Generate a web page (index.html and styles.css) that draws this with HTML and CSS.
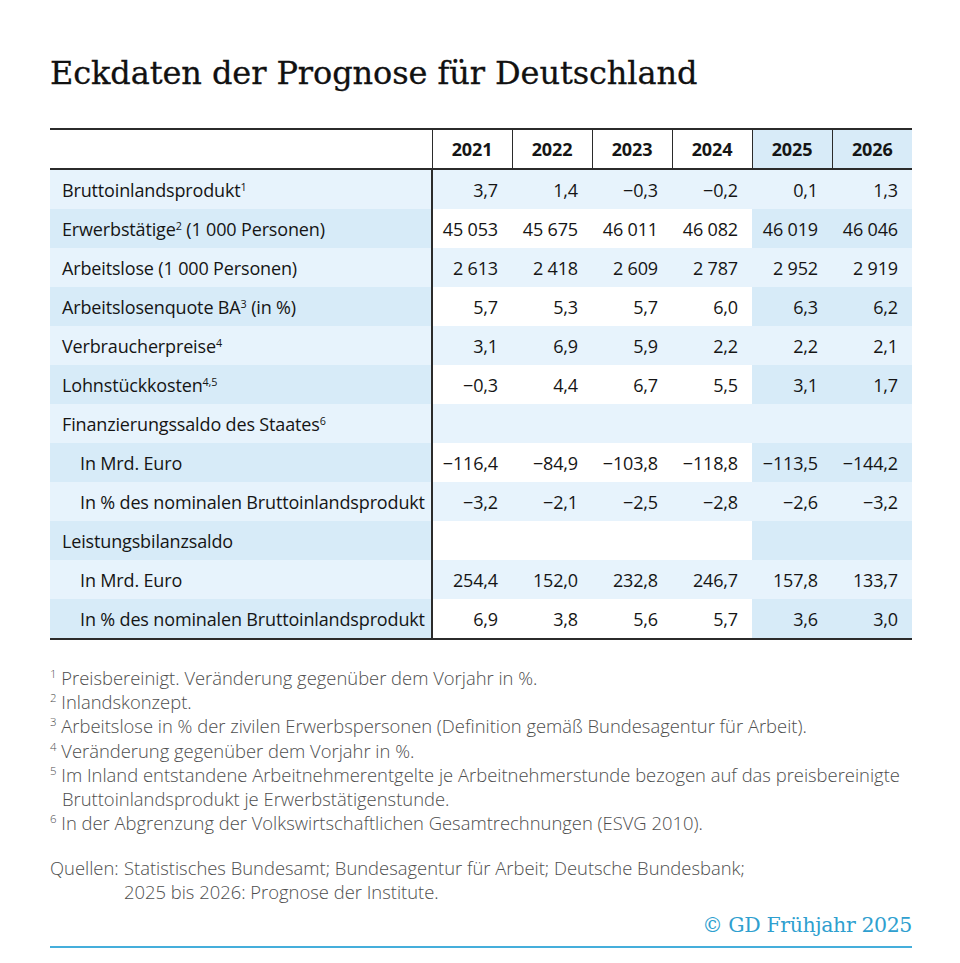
FILE: index.html
```html
<!DOCTYPE html>
<html lang="de">
<head>
<meta charset="utf-8">
<title>Eckdaten der Prognose für Deutschland</title>
<link rel="stylesheet" href="styles.css">
</head>
<body>
<main class="page">
  <h1 class="title">Eckdaten der Prognose für Deutschland</h1>
  <table class="data">
    <colgroup>
      <col class="c-label"><col class="c-year"><col class="c-year"><col class="c-year"><col class="c-year"><col class="c-year"><col class="c-year">
    </colgroup>
    <thead>
      <tr>
        <th class="h-label"></th>
        <th>2021</th><th>2022</th><th>2023</th><th>2024</th><th class="prog">2025</th><th class="prog last">2026</th>
      </tr>
    </thead>
    <tbody>
      <tr class="odd"><td class="label">Bruttoinlandsprodukt<sup>1</sup></td><td>3,7</td><td>1,4</td><td>−0,3</td><td>−0,2</td><td class="prog">0,1</td><td class="prog">1,3</td></tr>
      <tr class="even"><td class="label">Erwerbstätige<sup>2</sup> (1 000 Personen)</td><td>45 053</td><td>45 675</td><td>46 011</td><td>46 082</td><td class="prog">46 019</td><td class="prog">46 046</td></tr>
      <tr class="odd"><td class="label">Arbeitslose (1 000 Personen)</td><td>2 613</td><td>2 418</td><td>2 609</td><td>2 787</td><td class="prog">2 952</td><td class="prog">2 919</td></tr>
      <tr class="even"><td class="label">Arbeitslosenquote BA<sup>3</sup> (in %)</td><td>5,7</td><td>5,3</td><td>5,7</td><td>6,0</td><td class="prog">6,3</td><td class="prog">6,2</td></tr>
      <tr class="odd"><td class="label">Verbraucherpreise<sup>4</sup></td><td>3,1</td><td>6,9</td><td>5,9</td><td>2,2</td><td class="prog">2,2</td><td class="prog">2,1</td></tr>
      <tr class="even"><td class="label">Lohnstückkosten<sup>4,5</sup></td><td>−0,3</td><td>4,4</td><td>6,7</td><td>5,5</td><td class="prog">3,1</td><td class="prog">1,7</td></tr>
      <tr class="odd"><td class="label">Finanzierungssaldo des Staates<sup>6</sup></td><td></td><td></td><td></td><td></td><td class="prog"></td><td class="prog"></td></tr>
      <tr class="even"><td class="label sub">In Mrd. Euro</td><td>−116,4</td><td>−84,9</td><td>−103,8</td><td>−118,8</td><td class="prog">−113,5</td><td class="prog">−144,2</td></tr>
      <tr class="odd"><td class="label sub">In % des nominalen Bruttoinlandsprodukt</td><td>−3,2</td><td>−2,1</td><td>−2,5</td><td>−2,8</td><td class="prog">−2,6</td><td class="prog">−3,2</td></tr>
      <tr class="even"><td class="label">Leistungsbilanzsaldo</td><td></td><td></td><td></td><td></td><td class="prog"></td><td class="prog"></td></tr>
      <tr class="odd"><td class="label sub">In Mrd. Euro</td><td>254,4</td><td>152,0</td><td>232,8</td><td>246,7</td><td class="prog">157,8</td><td class="prog">133,7</td></tr>
      <tr class="even"><td class="label sub">In % des nominalen Bruttoinlandsprodukt</td><td>6,9</td><td>3,8</td><td>5,6</td><td>5,7</td><td class="prog">3,6</td><td class="prog">3,0</td></tr>
    </tbody>
  </table>

  <ol class="notes">
    <li><sup>1</sup> Preisbereinigt. Veränderung gegenüber dem Vorjahr in %.</li>
    <li><sup>2</sup> Inlandskonzept.</li>
    <li><sup>3</sup> Arbeitslose in % der zivilen Erwerbspersonen (Definition gemäß Bundesagentur für Arbeit).</li>
    <li><sup>4</sup> Veränderung gegenüber dem Vorjahr in %.</li>
    <li><sup>5</sup> Im Inland entstandene Arbeitnehmerentgelte je Arbeitnehmerstunde bezogen auf das preisbereinigte Bruttoinlandsprodukt je Erwerbstätigenstunde.</li>
    <li><sup>6</sup> In der Abgrenzung der Volkswirtschaftlichen Gesamtrechnungen (ESVG 2010).</li>
  </ol>

  <div class="sources">
    <span class="src-key">Quellen:</span>
    <span class="src-val">Statistisches Bundesamt; Bundesagentur für Arbeit; Deutsche Bundesbank;<br>2025 bis 2026: Prognose der Institute.</span>
  </div>

  <footer class="credit">© GD Frühjahr 2025</footer>
</main>
</body>
</html>
```

FILE: styles.css
```css
html, body {
  margin: 0;
  padding: 0;
  background: #ffffff;
}

.page {
  width: 862px;
  padding: 0 48px 0 50px;
  color: #1a1a1a;
  font-family: "Open Sans", "Noto Sans", sans-serif;
}

.title {
  margin: 0 0 35px 0;
  padding-top: 53px;
  font-family: "DejaVu Serif", "Liberation Serif", serif;
  font-weight: normal;
  font-size: 32px;
  line-height: 40px;
  letter-spacing: -0.1px;
  color: #111;
  -webkit-text-stroke: 0.3px #111;
}

.data {
  width: 862px;
  border-collapse: collapse;
  table-layout: fixed;
  border-top: 2px solid #2b2b2b;
  border-bottom: 2px solid #2b2b2b;
  font-size: 18px;
  letter-spacing: -0.15px;
  color: #151515;
}

.c-label { width: 382px; }
.c-year { width: 80px; }

.data th {
  height: 38px;
  padding: 0;
  font-weight: bold;
  text-align: center;
  border-left: 1px solid #2b2b2b;
  border-bottom: 2px solid #2b2b2b;
  background: #ffffff;
}
.data th.h-label { border-left: none; }
.data th.prog { background: #d8ebf8; }

.data td {
  height: 39px;
  padding: 0 14px 0 0;
  text-align: right;
  white-space: nowrap;
}

.data td.label {
  text-align: left;
  padding: 0 0 0 12px;
  border-right: 2px solid #2b2b2b;
}
.data td.label.sub { padding-left: 30px; }

.odd td { background: #e7f3fc; }
.even td { background: #ffffff; }
.even td.prog, .even td.label { background: #d7ebf8; }
.odd td.label, .odd td.prog { background: #e7f3fc; }

sup {
  font-size: 0.6em;
  line-height: 0;
  vertical-align: 0.55em;
}

.notes {
  list-style: none;
  margin: 26px 0 0 0;
  padding: 0;
  color: #4e4e4e;
  font-weight: 300;
  font-size: 18.4px;
  line-height: 24.2px;
  letter-spacing: 0;
}
.notes li {
  padding-left: 12px;
  text-indent: -12px;
}
.notes sup { font-size: 0.62em; vertical-align: 0.6em; }

.sources {
  display: flex;
  margin-top: 21px;
  color: #4e4e4e;
  font-weight: 300;
  font-size: 18.4px;
  line-height: 24px;
}
.src-key { width: 74px; flex: none; }

.credit {
  margin-top: 6px;
  padding-bottom: 6px;
  border-bottom: 2px solid #45aedb;
  text-align: right;
  font-family: "DejaVu Serif", "Liberation Serif", serif;
  font-size: 20.5px;
  line-height: 30px;
  color: #2f9fcf;
  letter-spacing: -0.4px;
}
```
